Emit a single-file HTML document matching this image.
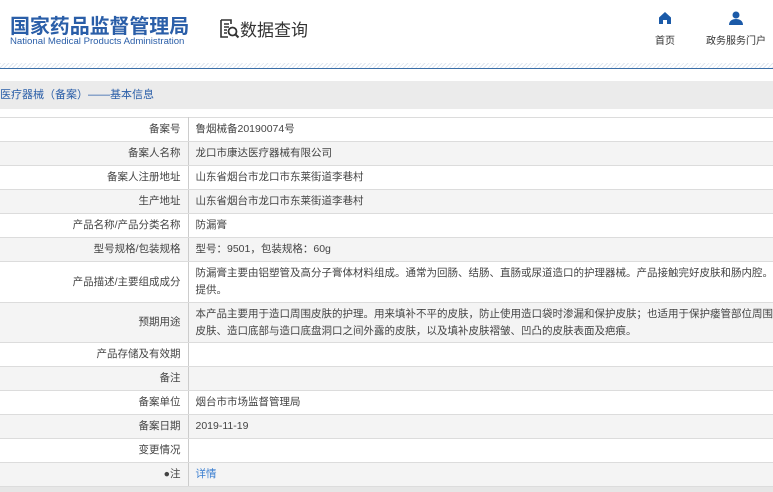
<!DOCTYPE html>
<html><head><meta charset="utf-8"><style>
*{margin:0;padding:0;box-sizing:border-box}
body{width:773px;height:492px;overflow:hidden;background:#fff;font-family:"Liberation Sans","Noto Sans CJK SC",sans-serif;position:relative}
.t1{position:absolute;left:10px;top:10px;font-size:20px;font-weight:bold;color:#2a5ea8;letter-spacing:-0.1px}
.t2{position:absolute;left:10px;top:36px;font-size:9.6px;color:#2a5ea8}
.q{position:absolute;left:218px;top:16px;font-size:17px;color:#333}
.nav{position:absolute;top:11px;font-size:10px;color:#333;text-align:center}
.hatch{position:absolute;left:0;top:63px;width:773px;height:5px;background:repeating-linear-gradient(135deg,#dfe6ef 0 1px,#fff 1px 3px)}
.line{position:absolute;left:0;top:68px;width:773px;height:1px;background:#3a6ea8}
.bar{position:absolute;left:0;top:81px;width:773px;height:28px;background:#ebebeb;font-size:11px;color:#2a5ea8;line-height:28px}
table{position:absolute;left:0;top:117px;width:773px;border-collapse:collapse;font-size:10.5px;color:#444;table-layout:fixed}
td{border-top:1px solid #dcdcdc;border-bottom:1px solid #dcdcdc;height:24px;line-height:17px;padding:0 0 0 7px;white-space:nowrap;overflow:hidden}
td.l{width:188px;text-align:right;border-right:1px solid #ccc;padding:0 7px 0 0}
tr:nth-child(even) td{background:#f4f4f4}
.bot{position:absolute;left:0;top:487px;width:773px;height:5px;background:#e6e6e6}
</style></head><body>
<div class="t1">国家药品监督管理局</div>
<div class="t2">National Medical Products Administration</div>
<div class="q"><svg width="22" height="22" viewBox="0 0 22 22" style="vertical-align:-4px"><path d="M3 2h10v4M3 2v17h7M6 6h5M6 9h5M6 12h3M6 15h3" stroke="#333" stroke-width="1.6" fill="none"/><circle cx="14.5" cy="13.5" r="4" stroke="#333" stroke-width="1.8" fill="none"/><path d="M17.5 16.5l3 3" stroke="#333" stroke-width="2"/></svg>数据查询</div>
<div class="nav" style="left:650px;width:30px"><svg width="14" height="14" viewBox="0 0 14 14"><path d="M1 6.5L7 1l6 5.5V13H9V9H5v4H1z" fill="#1b5aa8"/></svg><div style="margin-top:4px">首页</div></div>
<div class="nav" style="left:701px;width:70px"><svg width="14" height="14" viewBox="0 0 14 14"><circle cx="7" cy="4" r="3.5" fill="#1b5aa8"/><path d="M0 14c0-4 3-6 7-6s7 2 7 6z" fill="#1b5aa8"/></svg><div style="margin-top:4px">政务服务门户</div></div>
<div class="hatch"></div><div class="line"></div>
<div class="bar">医疗器械（备案）——基本信息</div>
<table>
<tr><td class="l">备案号</td><td>鲁烟械备20190074号</td></tr>
<tr><td class="l">备案人名称</td><td>龙口市康达医疗器械有限公司</td></tr>
<tr><td class="l">备案人注册地址</td><td>山东省烟台市龙口市东莱街道李巷村</td></tr>
<tr><td class="l">生产地址</td><td>山东省烟台市龙口市东莱街道李巷村</td></tr>
<tr><td class="l">产品名称/产品分类名称</td><td>防漏膏</td></tr>
<tr><td class="l">型号规格/包装规格</td><td>型号：9501，包装规格：60g</td></tr>
<tr><td class="l" style="height:41px">产品描述/主要组成成分</td><td style="height:41px">防漏膏主要由铝塑管及高分子膏体材料组成。通常为回肠、结肠、直肠或尿道造口的护理器械。产品接触完好皮肤和肠内腔。非无菌<br>提供。</td></tr>
<tr><td class="l" style="height:40px">预期用途</td><td>本产品主要用于造口周围皮肤的护理。用来填补不平的皮肤，防止使用造口袋时渗漏和保护皮肤；也适用于保护瘘管部位周围外露的<br>皮肤、造口底部与造口底盘洞口之间外露的皮肤，以及填补皮肤褶皱、凹凸的皮肤表面及疤痕。</td></tr>
<tr><td class="l">产品存储及有效期</td><td></td></tr>
<tr><td class="l">备注</td><td></td></tr>
<tr><td class="l">备案单位</td><td>烟台市市场监督管理局</td></tr>
<tr><td class="l">备案日期</td><td>2019-11-19</td></tr>
<tr><td class="l">变更情况</td><td></td></tr>
<tr><td class="l">●注</td><td style="color:#3a7ed0">详情</td></tr>
</table>
<div class="bot"></div>
</body></html>
